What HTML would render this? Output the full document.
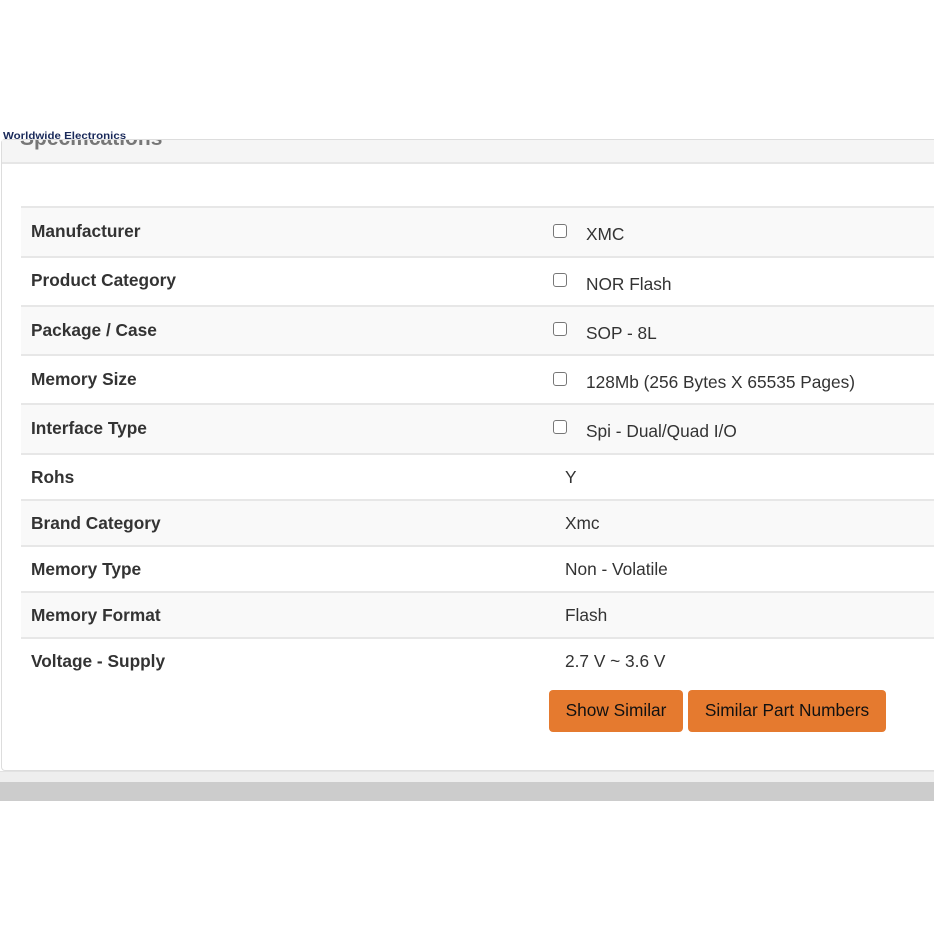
<!DOCTYPE html>
<html><head><style>
body{margin:0;width:934px;height:934px;background:#fff;position:relative;overflow:hidden;font-family:"Liberation Sans",Arial,sans-serif;color:#333}
.card{position:absolute;left:1px;top:139px;width:940px;height:630px;border:1px solid #ddd;border-radius:4px;background:#fff}
.hdr{position:absolute;left:0;top:0;right:0;height:22px;background:#f5f5f5;border-bottom:2px solid #e6e6e6;overflow:hidden}
.hdr span{position:absolute;left:18px;top:-13px;font-size:21px;font-weight:bold;color:#777}
.logo{position:absolute;left:3px;top:131px;font-size:10px;font-weight:bold;color:#1a2a5a;transform:scaleX(1.15);transform-origin:left}
.row{position:absolute;left:21px;width:913px;border-top:2px solid #e7e7e7;font-size:17.3px}
.row.s{background:#f9f9f9}
.k{position:absolute;left:10px;font-weight:bold;color:#333}
.v{position:absolute;left:544px}
.cb{position:absolute;left:532px;width:12px;height:12px;border:1px solid #777;border-radius:3px;background:#fff}
.v2{position:absolute;left:565px}
.btn{position:absolute;top:690px;height:42px;background:#e57a2f;border-radius:4px;font-size:17.3px;color:#111;line-height:41px;text-align:center}
.band1{position:absolute;left:0;top:771px;width:934px;height:11px;background:#eeeeee;border-top:1px solid #e2e2e2}
.band2{position:absolute;left:0;top:782px;width:934px;height:19px;background:#cccccc}
</style></head><body>
<div class="card"><div class="hdr"><span>Specifications</span></div></div>
<div class="logo">Worldwide Electronics</div>

<div class="row s" style="top:206px;height:48px"><span class="k" style="top:13px">Manufacturer</span><span class="cb" style="top:16px"></span><span class="v2" style="top:16px">XMC</span></div>
<div class="row" style="top:256px;height:47px"><span class="k" style="top:12px">Product Category</span><span class="cb" style="top:15px"></span><span class="v2" style="top:16px">NOR Flash</span></div>
<div class="row s" style="top:305px;height:47px"><span class="k" style="top:13px">Package / Case</span><span class="cb" style="top:15px"></span><span class="v2" style="top:16px">SOP - 8L</span></div>
<div class="row" style="top:354px;height:47px"><span class="k" style="top:13px">Memory Size</span><span class="cb" style="top:16px"></span><span class="v2" style="top:16px">128Mb (256 Bytes X 65535 Pages)</span></div>
<div class="row s" style="top:403px;height:48px"><span class="k" style="top:13px">Interface Type</span><span class="cb" style="top:15px"></span><span class="v2" style="top:16px">Spi - Dual/Quad I/O</span></div>
<div class="row" style="top:453px;height:44px"><span class="k" style="top:12px">Rohs</span><span class="v" style="top:12px">Y</span></div>
<div class="row s" style="top:499px;height:44px"><span class="k" style="top:12px">Brand Category</span><span class="v" style="top:12px">Xmc</span></div>
<div class="row" style="top:545px;height:44px"><span class="k" style="top:12px">Memory Type</span><span class="v" style="top:12px">Non - Volatile</span></div>
<div class="row s" style="top:591px;height:44px"><span class="k" style="top:12px">Memory Format</span><span class="v" style="top:12px">Flash</span></div>
<div class="row" style="top:637px;height:44px"><span class="k" style="top:12px">Voltage - Supply</span><span class="v" style="top:12px">2.7 V ~ 3.6 V</span></div>

<div class="btn" style="left:549px;width:134px">Show Similar</div>
<div class="btn" style="left:688px;width:198px">Similar Part Numbers</div>

<div class="band1"></div><div class="band2"></div>
</body></html>
